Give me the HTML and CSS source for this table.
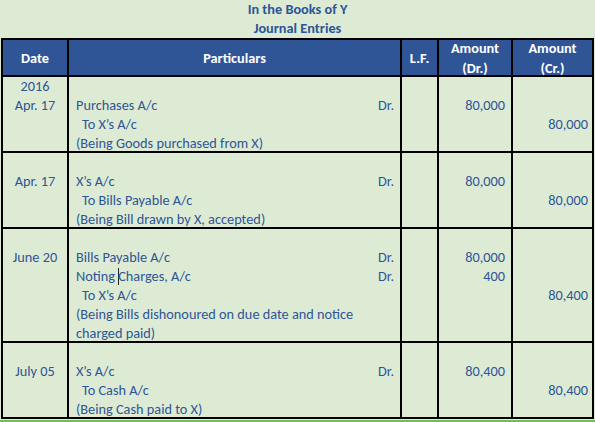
FILE: index.html
```html
<!DOCTYPE html>
<html>
<head>
<meta charset="utf-8">
<link rel="stylesheet" href="styles.css">
</head>
<body>
<div class="sheet">
  <div class="title">
    <div class="line">In the Books of Y</div>
    <div class="line">Journal Entries</div>
  </div>
  <table class="journal">
    <colgroup>
      <col class="c-date"><col class="c-part"><col class="c-lf"><col class="c-dr"><col class="c-cr">
    </colgroup>
    <thead>
      <tr>
        <th><div class="hd">Date</div></th>
        <th><div class="hd">Particulars</div></th>
        <th><div class="hd">L.F.</div></th>
        <th><div class="hd"><span>Amount</span><span>(Dr.)</span></div></th>
        <th><div class="hd"><span>Amount</span><span>(Cr.)</span></div></th>
      </tr>
    </thead>
    <tbody>
      <tr>
        <td class="date"><div class="cell r4"><div class="line">2016</div><div class="line">Apr. 17</div></div></td>
        <td class="part"><div class="cell r4">
          <div class="line"></div>
          <div class="line dr"><span>Purchases A/c</span><span>Dr.</span></div>
          <div class="line to">To X’s A/c</div>
          <div class="line">(Being Goods purchased from X)</div>
        </div></td>
        <td><div class="cell r4"></div></td>
        <td class="amt"><div class="cell r4"><div class="line"></div><div class="line">80,000</div></div></td>
        <td class="amt cr"><div class="cell r4"><div class="line"></div><div class="line"></div><div class="line">80,000</div></div></td>
      </tr>
      <tr>
        <td class="date"><div class="cell r4"><div class="line"></div><div class="line">Apr. 17</div></div></td>
        <td class="part"><div class="cell r4">
          <div class="line"></div>
          <div class="line dr"><span>X’s A/c</span><span>Dr.</span></div>
          <div class="line to">To Bills Payable A/c</div>
          <div class="line">(Being Bill drawn by X, accepted)</div>
        </div></td>
        <td><div class="cell r4"></div></td>
        <td class="amt"><div class="cell r4"><div class="line"></div><div class="line">80,000</div></div></td>
        <td class="amt cr"><div class="cell r4"><div class="line"></div><div class="line"></div><div class="line">80,000</div></div></td>
      </tr>
      <tr>
        <td class="date"><div class="cell r6"><div class="line"></div><div class="line">June 20</div></div></td>
        <td class="part"><div class="cell r6">
          <div class="line"></div>
          <div class="line dr"><span>Bills Payable A/c</span><span>Dr.</span></div>
          <div class="line dr"><span>Noting <span class="caret"></span>Charges, A/c</span><span>Dr.</span></div>
          <div class="line to">To X’s A/c</div>
          <div class="line">(Being Bills dishonoured on due date and notice</div>
          <div class="line">charged paid)</div>
        </div></td>
        <td><div class="cell r6"></div></td>
        <td class="amt"><div class="cell r6"><div class="line"></div><div class="line">80,000</div><div class="line">400</div></div></td>
        <td class="amt cr"><div class="cell r6"><div class="line"></div><div class="line"></div><div class="line"></div><div class="line">80,400</div></div></td>
      </tr>
      <tr>
        <td class="date"><div class="cell r4"><div class="line"></div><div class="line">July 05</div></div></td>
        <td class="part"><div class="cell r4">
          <div class="line"></div>
          <div class="line dr"><span>X’s A/c</span><span>Dr.</span></div>
          <div class="line to">To Cash A/c</div>
          <div class="line">(Being Cash paid to X)</div>
        </div></td>
        <td><div class="cell r4"></div></td>
        <td class="amt"><div class="cell r4"><div class="line"></div><div class="line">80,400</div></div></td>
        <td class="amt cr"><div class="cell r4"><div class="line"></div><div class="line"></div><div class="line">80,400</div></div></td>
      </tr>
    </tbody>
  </table>
  <div class="selection"></div>
</div>
</body>
</html>
```

FILE: styles.css
```css
html, body {
  margin: 0;
  padding: 0;
  background: #DDEBD4;
}
body {
  width: 595px;
  height: 422px;
  overflow: hidden;
  font-family: "Carlito", "Liberation Sans", sans-serif;
  font-size: 14.3px;
  color: #2F5597;
}
.sheet {
  display: flex;
  flex-direction: column;
}
.line {
  height: 19px;
  line-height: 19px;
  white-space: nowrap;
}
.title {
  text-align: center;
  font-weight: bold;
  height: 38px;
}
.journal {
  border-collapse: collapse;
  table-layout: fixed;
  width: 591px;
  margin-left: 1px;
}
.c-date { width: 66px; }
.c-part { width: 333px; }
.c-lf { width: 37px; }
.c-dr { width: 74px; }
.c-cr { width: 81px; }
.journal th, .journal td {
  border: 2px solid #000;
  padding: 0;
  vertical-align: top;
}
.journal th {
  background: #2F5597;
  color: #fff;
  font-weight: bold;
}
.hd {
  height: 35px;
  display: flex;
  flex-direction: column;
  justify-content: center;
  align-items: center;
  line-height: 20px;
  white-space: nowrap;
}
.cell.r4 { height: 74px; }
.cell.r6 { height: 112px; }
.date { text-align: center; }
.part .cell { padding-left: 7px; padding-right: 6px; }
.dr {
  display: flex;
  justify-content: space-between;
}
.to { padding-left: 6px; }
.amt { text-align: right; }
.amt .cell { padding-right: 6px; }
.amt.cr .cell { padding-right: 4px; }
.caret {
  display: inline-block;
  width: 0;
  height: 17px;
  border-left: 1px solid #222;
  vertical-align: -4px;
  margin-right: -1px;
}
.selection {
  height: 2px;
  margin-top: 1px;
  background: #72BC5E;
}
```
